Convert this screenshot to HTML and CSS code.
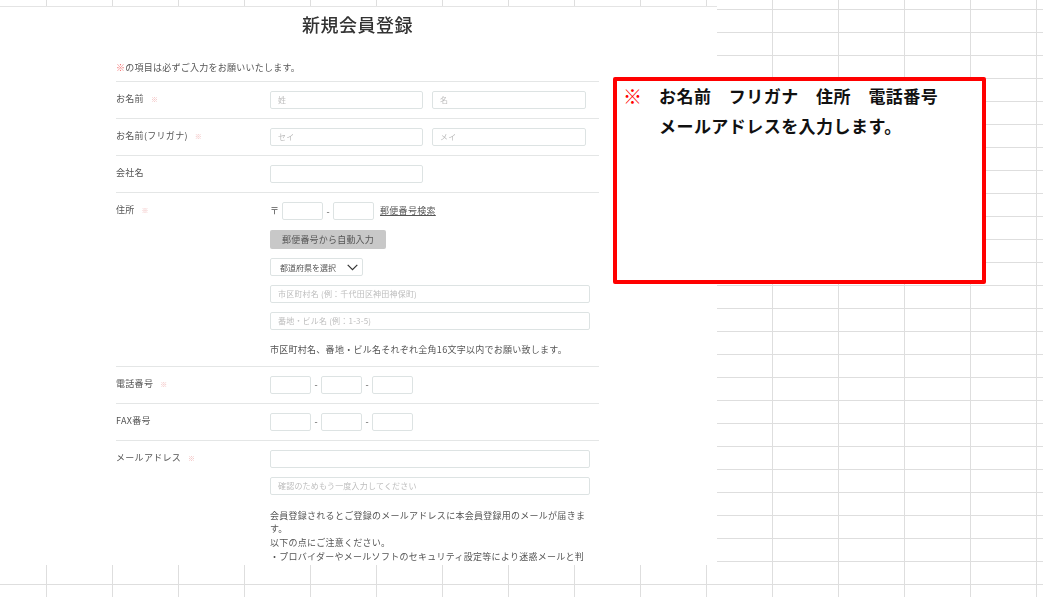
FILE: index.html
```html
<!DOCTYPE html>
<html lang="ja">
<head>
<meta charset="utf-8">
<title>新規会員登録</title>
<link rel="stylesheet" href="styles.css">
</head>
<body>
<main class="panel">
  <form class="form">
    <h1 class="title">新規会員登録</h1>
    <p class="note"><span class="req-strong">※</span>の項目は必ずご入力をお願いいたします。</p>
    <div class="row">
      <div class="label">お名前<span class="req">※</span></div>
      <div class="pair"><input class="input half" placeholder="姓"><input class="input half-b" placeholder="名"></div>
    </div>
    <div class="row">
      <div class="label">お名前(フリガナ)<span class="req">※</span></div>
      <div class="pair"><input class="input half" placeholder="セイ"><input class="input half-b" placeholder="メイ"></div>
    </div>
    <div class="row">
      <div class="label">会社名</div>
      <div class="pair"><input class="input half"></div>
    </div>
    <div class="row">
      <div class="label">住所<span class="req">※</span></div>
      <div class="stack">
        <div class="inline"><span class="zipmark">〒</span><input class="input short"><span class="dash">-</span><input class="input short"><a class="link" href="#">郵便番号検索</a></div>
        <button type="button" class="button">郵便番号から自動入力</button>
        <div class="select-wrap">
          <select class="select"><option>都道府県を選択</option></select>
          <svg class="chevron" width="11" height="7" viewBox="0 0 11 7"><path d="M0.7 0.8 L5.5 5.6 L10.3 0.8" fill="none" stroke="#333" stroke-width="1.2"/></svg>
        </div>
        <input class="input full" placeholder="市区町村名 (例：千代田区神田神保町)">
        <input class="input full" placeholder="番地・ビル名 (例：1-3-5)">
        <p class="help">市区町村名、番地・ビル名それぞれ全角16文字以内でお願い致します。</p>
      </div>
    </div>
    <div class="row">
      <div class="label">電話番号<span class="req">※</span></div>
      <div class="inline"><input class="input short"><span class="dash">-</span><input class="input short"><span class="dash">-</span><input class="input short"></div>
    </div>
    <div class="row">
      <div class="label">FAX番号</div>
      <div class="inline"><input class="input short"><span class="dash">-</span><input class="input short"><span class="dash">-</span><input class="input short"></div>
    </div>
    <div class="row">
      <div class="label">メールアドレス<span class="req">※</span></div>
      <div class="stack">
        <input class="input full">
        <input class="input full" placeholder="確認のためもう一度入力してください">
        <p class="help wide">会員登録されるとご登録のメールアドレスに本会員登録用のメールが届きます。<br>以下の点にご注意ください。<br>・プロバイダーやメールソフトのセキュリティ設定等により迷惑メールと判</p>
      </div>
    </div>
  </form>
</main>
<aside class="callout">
  <span class="callout-mark">※</span>
  <p class="callout-text">お名前　フリガナ　住所　電話番号<br>メールアドレスを入力します。</p>
</aside>
</body>
</html>
```

FILE: styles.css
```css
* {
  box-sizing: border-box;
}

html,
body {
  margin: 0;
  height: 597px;
  overflow: hidden;
}

body {
  padding-top: 6px;
  background-color: #fff;
  background-image:
    linear-gradient(to right, #dedede 1px, transparent 1px),
    linear-gradient(to bottom, #dedede 1px, transparent 1px);
  background-size: 66px 23px;
  background-position: 46px 9px;
  font-family: "Noto Sans CJK JP", "Noto Sans", sans-serif;
  color: #555;
}

.panel {
  width: 717px;
  height: 559px;
  overflow: hidden;
  background: #fff;
  border-top: 1px solid #e4e4e4;
}

.form {
  width: 483px;
  margin-left: 116px;
  filter: blur(0.35px);
}

.title {
  margin: 0;
  height: 38px;
  padding-top: 5px;
  font-size: 18px;
  line-height: 24px;
  font-weight: 500;
  letter-spacing: 0.5px;
  text-align: center;
  color: #333;
}

.note {
  margin: 0;
  height: 36px;
  padding-top: 16px;
  font-size: 9px;
  line-height: 14px;
  letter-spacing: 0.25px;
}

.req-strong {
  color: #f26a6a;
}

.row {
  display: grid;
  grid-template-columns: 154px 1fr;
  padding: 9px 0;
  border-top: 1px solid #e4e6e6;
}

.label {
  font-size: 9px;
  line-height: 14px;
  padding-top: 1px;
  letter-spacing: 0.3px;
  color: #555;
}

.req {
  margin-left: 7px;
  font-size: 7px;
  color: #f0b8b8;
}

.pair {
  display: flex;
  gap: 9px;
}

.inline {
  display: flex;
  align-items: center;
  height: 18px;
}

.stack {
  display: flex;
  flex-direction: column;
  gap: 9px;
  align-items: flex-start;
}

.input,
.half-b {
  display: block;
  height: 18px;
  padding: 0 7px 1px;
  border: 1px solid #dde3e3;
  border-radius: 2px;
  background: #fff;
  font-family: inherit;
  font-size: 8px;
  letter-spacing: 0.2px;
  color: #555;
}

.input::placeholder {
  color: #bdbdbd;
  opacity: 1;
}

.half {
  width: 153px;
}

.half-b {
  width: 154px;
}

.short {
  width: 41px;
}

.full {
  width: 320px;
}

.zipmark {
  width: 12px;
  margin-bottom: 2px;
  font-size: 9px;
}

.dash {
  width: 10px;
  text-align: center;
  font-size: 9px;
}

.link {
  margin: 0 0 2px 6px;
  font-size: 9px;
  letter-spacing: 0.3px;
  color: #555;
  text-decoration: underline;
}

.button {
  width: 116px;
  height: 19px;
  margin-top: 1px;
  padding: 0;
  border: 0;
  border-radius: 2px;
  background: #c8c8c8;
  font-family: inherit;
  font-size: 9px;
  letter-spacing: 0.2px;
  color: #555;
}

.select-wrap {
  position: relative;
  width: 93px;
  height: 18px;
}

.select {
  display: block;
  appearance: none;
  width: 100%;
  height: 100%;
  padding: 0 0 0 9px;
  border: 1px solid #dde3e3;
  border-radius: 2px;
  background: #fff;
  font-family: inherit;
  font-size: 8px;
  color: #555;
}

.chevron {
  position: absolute;
  top: 6px;
  right: 5px;
  pointer-events: none;
}

.help {
  margin: 4px 0 0;
  width: 320px;
  font-size: 9px;
  line-height: 13.7px;
  letter-spacing: 0.27px;
  color: #555;
}

.wide {
  margin-top: 5px;
  width: 318px;
}

.callout {
  position: absolute;
  top: 77px;
  left: 613px;
  width: 373px;
  height: 207px;
  display: flex;
  padding: 0 0 0 6px;
  background: #fff;
  border: 4px solid #f00;
  border-radius: 2px;
  line-height: 30px;
}

.callout-mark {
  width: 36px;
  font-size: 19px;
  color: #f00;
}

.callout-text {
  margin: 0;
  font-weight: 700;
  font-size: 17px;
  letter-spacing: 0.45px;
  color: #111;
}
```
